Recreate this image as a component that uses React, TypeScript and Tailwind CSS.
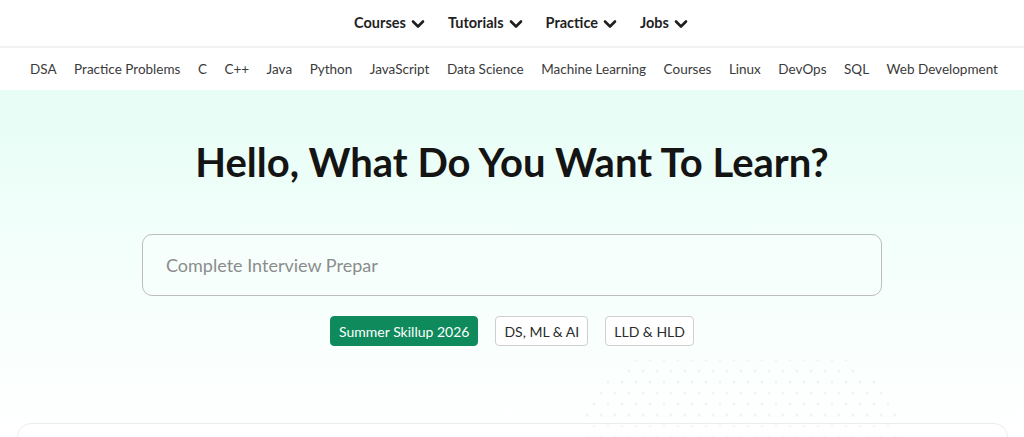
import { ReactNode } from "react";

const mainMenu = ["Courses", "Tutorials", "Practice", "Jobs"];

const topics = [
  "DSA",
  "Practice Problems",
  "C",
  "C++",
  "Java",
  "Python",
  "JavaScript",
  "Data Science",
  "Machine Learning",
  "Courses",
  "Linux",
  "DevOps",
  "SQL",
  "Web Development",
];

function Chevron() {
  return (
    <svg width="14" height="10" viewBox="0 0 14 10" className="mt-[2px]">
      <polyline
        points="2,2.5 7,7.5 12,2.5"
        fill="none"
        stroke="#1f1f1f"
        strokeWidth="2.6"
        strokeLinecap="round"
        strokeLinejoin="round"
      />
    </svg>
  );
}

function Chip({ children, active }: { children: ReactNode; active?: boolean }) {
  return (
    <button
      className={
        active
          ? "h-[30px] px-[8px] rounded-[4px] bg-[#0f8a5c] text-white text-[14px] border border-[#0f8a5c]"
          : "h-[30px] px-[8px] rounded-[4px] bg-white text-[#2b2b2b] text-[14px] border border-[#cfcfcf]"
      }
    >
      {children}
    </button>
  );
}

// faint dotted flourish behind the lower part of the hero
function Dots() {
  const dots = [];
  for (let r = 0; r < 9; r++) {
    for (let c = 0; c < 24; c++) {
      const x = c * 14 + (r % 2) * 7;
      const y = r * 11;
      const dx = x - 160;
      const dy = y - 75;
      const d = Math.sqrt(dx * dx + dy * dy * 2.5);
      if (d > 160) continue;
      dots.push(<circle key={`${r}-${c}`} cx={x} cy={y} r="1.5" fill="#f0f2f3" />);
    }
  }
  return (
    <svg
      width="330"
      height="100"
      viewBox="0 0 330 100"
      className="absolute left-[580px] top-[270px] pointer-events-none"
    >
      {dots}
    </svg>
  );
}

export default function App() {
  return (
    <div className="w-[1024px] h-[437px] overflow-hidden bg-white font-['Lato','Noto_Sans',sans-serif]">
      <header className="h-[48px] pl-[18px] flex items-center justify-center gap-[23px] border-b-2 border-[#f1f1f1]">
        {mainMenu.map((m) => (
          <div key={m} className="flex items-center gap-[5px] text-[14.5px] font-bold text-[#1f1f1f]">
            <span>{m}</span>
            <Chevron />
          </div>
        ))}
      </header>

      <nav className="h-[42px] pl-[4px] flex items-center justify-center gap-[17.5px] text-[13.5px] text-[#3a3a3a]">
        {topics.map((t, i) => (
          <span key={i}>{t}</span>
        ))}
      </nav>

      <section className="relative h-[347px] bg-gradient-to-b from-[#e6fdf6] via-[#f4fffb] to-white">
        <Dots />
        <div className="relative flex flex-col items-center">
          <h1 className="mt-[46px] text-[40px] leading-[52px] font-bold text-[#141414] font-['Lato',sans-serif]">
            Hello, What Do You Want To Learn?
          </h1>
          <div className="mt-[46px] w-[740px] h-[62px] rounded-[10px] border-[1.5px] border-[#bdbdbd] bg-[#f6fffc] flex items-center px-[23px]">
            <span className="text-[18px] text-[#8c8c8c]">Complete Interview Prepar</span>
          </div>
          <div className="mt-[20px] flex gap-[17px]">
            <Chip active>Summer Skillup 2026</Chip>
            <Chip>DS, ML &amp; AI</Chip>
            <Chip>LLD &amp; HLD</Chip>
          </div>
        </div>
        <div className="absolute left-[17px] right-[16px] top-[333px] h-[40px] rounded-t-[14px] border border-[#ececec] bg-white/40" />
      </section>
    </div>
  );
}
